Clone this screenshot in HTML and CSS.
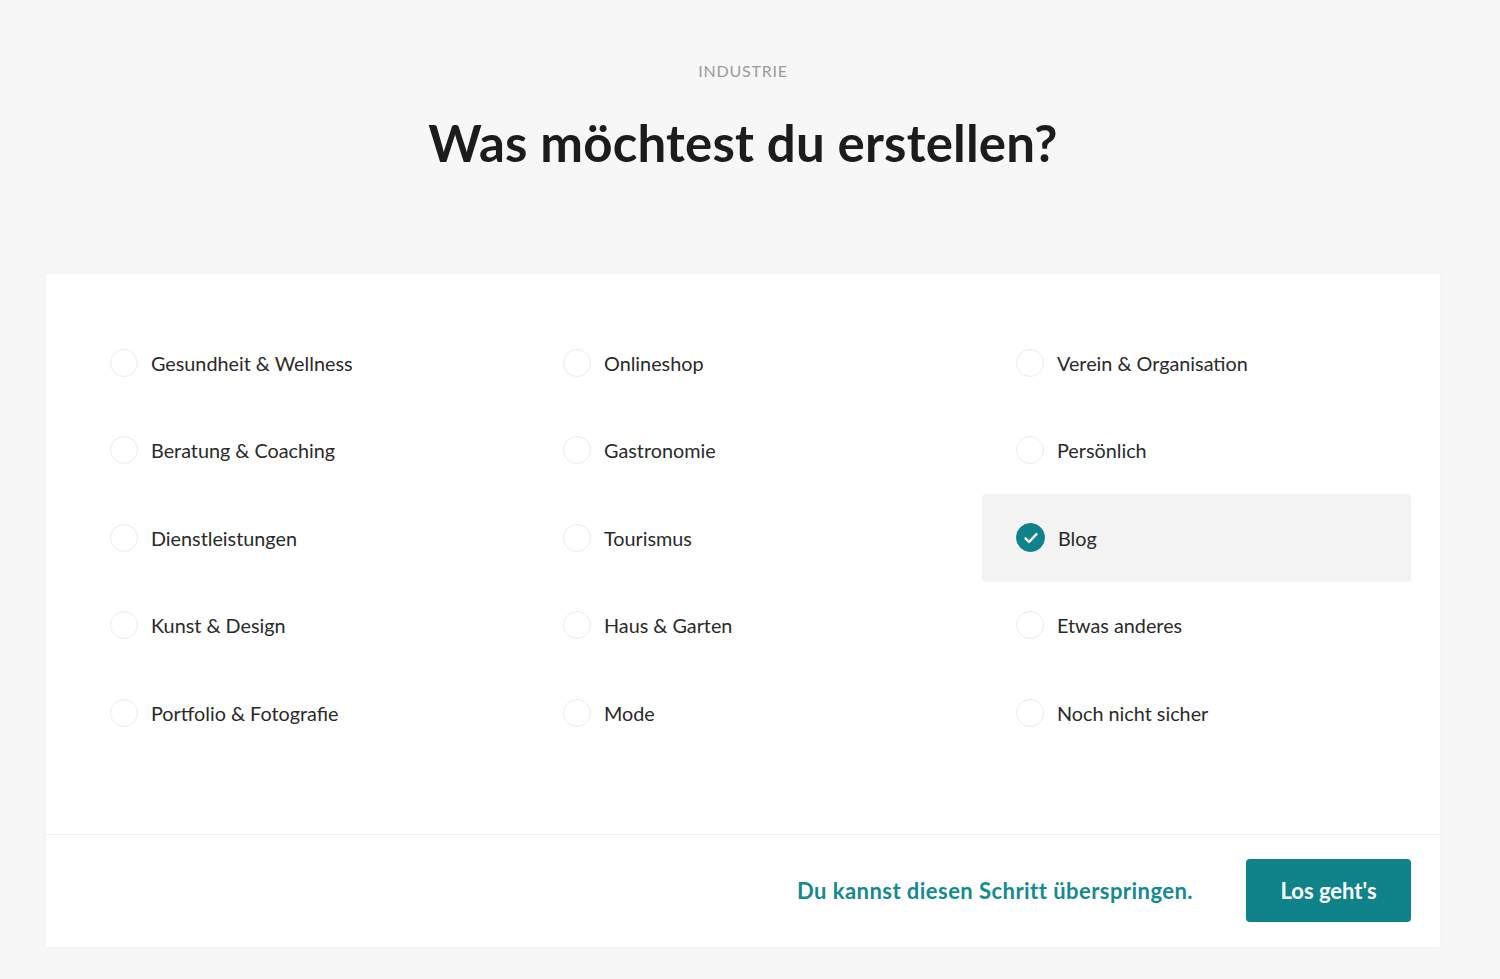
FILE: index.html
```html
<!DOCTYPE html>
<html lang="de">
<head>
    <meta charset="UTF-8">
    <title>Industrie</title>
    <link rel="stylesheet" href="styles.css">
</head>
<body>
<div id="page">
    <div class="intro">
        <div class="eyebrow">INDUSTRIE</div>
        <h1>Was möchtest du erstellen?</h1>
    </div>
    <div class="card">
        <div class="options">
            <div class="option"><span class="radio"></span>Gesundheit &amp; Wellness</div>
            <div class="option"><span class="radio"></span>Onlineshop</div>
            <div class="option"><span class="radio"></span>Verein &amp; Organisation</div>
            <div class="option"><span class="radio"></span>Beratung &amp; Coaching</div>
            <div class="option"><span class="radio"></span>Gastronomie</div>
            <div class="option"><span class="radio"></span>Persönlich</div>
            <div class="option"><span class="radio"></span>Dienstleistungen</div>
            <div class="option"><span class="radio"></span>Tourismus</div>
            <div class="option selected">
                <span class="radio">
                    <svg width="18" height="18" viewBox="0 0 18 18"><path d="M3.5 9.4l3.6 3.6L14.5 5.2" fill="none" stroke="#fff" stroke-width="2.4" stroke-linecap="round" stroke-linejoin="round"/></svg>
                </span>Blog
            </div>
            <div class="option"><span class="radio"></span>Kunst &amp; Design</div>
            <div class="option"><span class="radio"></span>Haus &amp; Garten</div>
            <div class="option"><span class="radio"></span>Etwas anderes</div>
            <div class="option"><span class="radio"></span>Portfolio &amp; Fotografie</div>
            <div class="option"><span class="radio"></span>Mode</div>
            <div class="option"><span class="radio"></span>Noch nicht sicher</div>
        </div>
        <div class="footer">
            <a class="skip" href="#">Du kannst diesen Schritt überspringen.</a>
            <button type="button" class="go">Los geht's</button>
        </div>
    </div>
</div>
</body>
</html>
```

FILE: styles.css
```css
* {
    margin: 0;
    padding: 0;
    border: 0;
    box-sizing: border-box;
}
html, body {
    height: 100%;
}
body {
    background-color: #f7f7f7;
    font-family: Lato, "Noto Sans", sans-serif;
    color: #222;
}
#page {
    padding: 0 60px 0 46px;
}
.intro {
    text-align: center;
    padding-top: 61px;
    height: 274px;
}
.eyebrow {
    font-size: 16px;
    line-height: 20px;
    color: #9a9a9a;
    letter-spacing: 0.8px;
}
h1 {
    margin-top: 32px;
    font-size: 51px;
    line-height: 60px;
    font-weight: 700;
    color: #1c1c1c;
    letter-spacing: 0.2px;
}
.card {
    background-color: #fff;
    width: 1394px;
    box-shadow: 0 0 6px rgba(0, 0, 0, 0.03);
}
.options {
    display: grid;
    grid-template-columns: repeat(3, 429px);
    grid-auto-rows: 87.5px;
    column-gap: 24px;
    padding: 45px 29px 77px 30px;
    border-bottom: 1px solid #f1f1f1;
}
.option {
    display: flex;
    align-items: center;
    padding-left: 34px;
    font-size: 19.8px;
    color: #2a2a2a;
    border-radius: 4px;
}
.option.selected {
    background-color: #f3f3f3;
}
.radio {
    width: 28px;
    height: 28px;
    border-radius: 50%;
    border: 1.5px solid #ececec;
    background-color: #fff;
    margin-right: 13px;
    display: flex;
    align-items: center;
    justify-content: center;
    flex-shrink: 0;
}
.selected .radio {
    background-color: #0f8389;
    border-color: #0f8389;
    width: 29px;
    height: 29px;
}
.footer {
    height: 112px;
    display: flex;
    align-items: center;
    justify-content: flex-end;
    padding-right: 29px;
}
.skip {
    font-size: 22px;
    font-weight: 700;
    color: #138a90;
    text-decoration: none;
    letter-spacing: 0.45px;
    margin-right: 53px;
}
.go {
    width: 165px;
    height: 63px;
    background-color: #0f8389;
    color: #fff;
    font-family: Lato, "Noto Sans", sans-serif;
    font-size: 22px;
    font-weight: 700;
    border-radius: 4px;
}
```
